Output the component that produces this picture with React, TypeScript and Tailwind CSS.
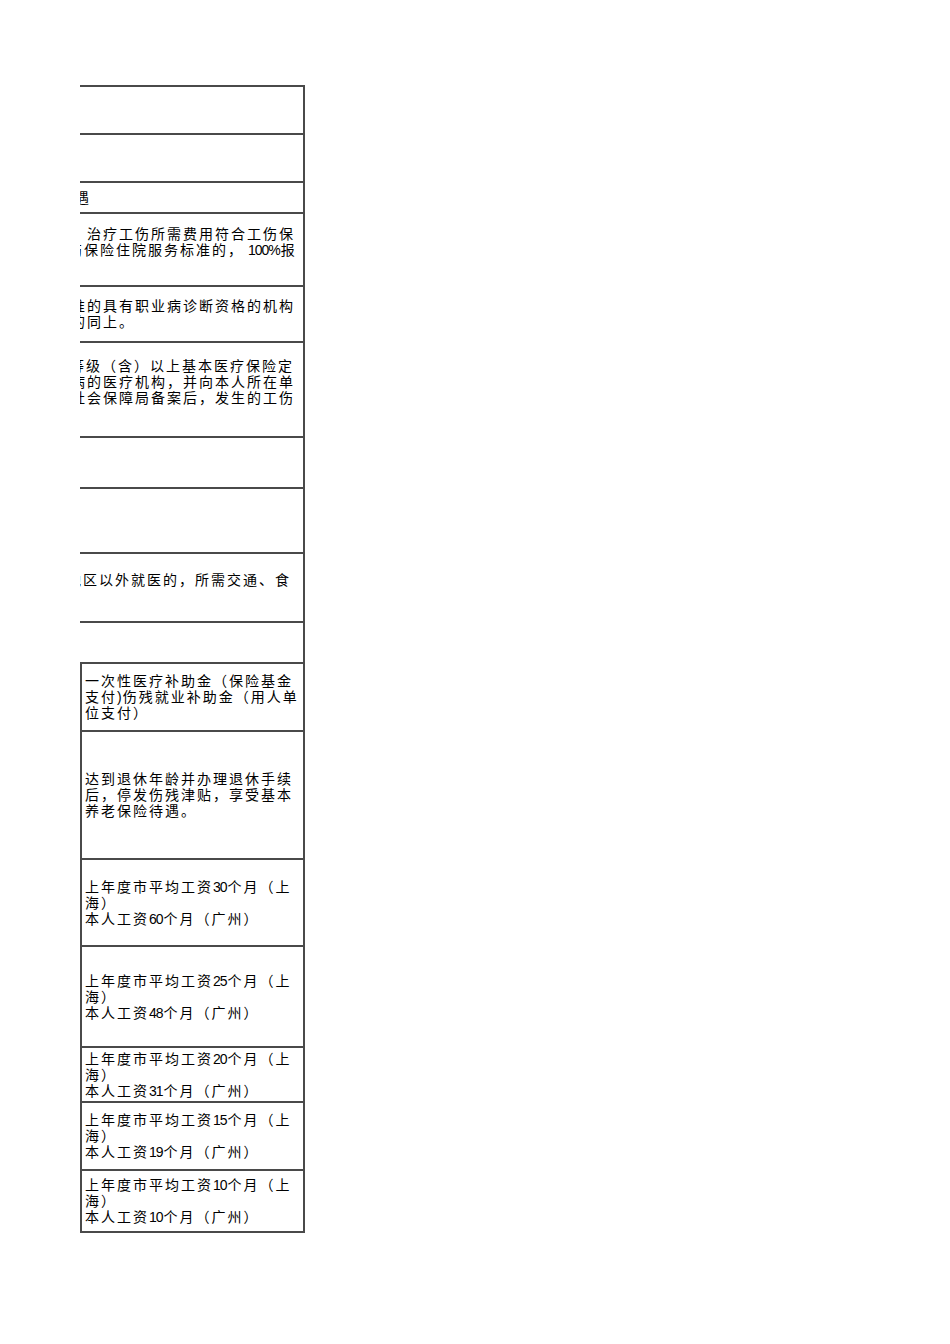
import React from "react";

const font = "font-['Liberation_Sans','Noto_Sans_CJK_SC',sans-serif]";

function D({ children }: { children: React.ReactNode }) {
  return <span className="text-[14px] tracking-[-1px]">{children}</span>;
}

type Line = { ml: string; text: React.ReactNode } | null;

function UpperRow({ h, lines }: { h: string; lines?: Line[] }) {
  return (
    <div className={`${h} border-b-2 border-[#4a4a4a] overflow-hidden flex flex-col justify-center`}>
      {lines &&
        lines.map((l, i) =>
          l ? (
            <div key={i} className={`h-4 leading-4 whitespace-nowrap ${l.ml}`}>
              {l.text}
            </div>
          ) : (
            <div key={i} className="h-4" />
          )
        )}
    </div>
  );
}

function LowerRow({ h, lines }: { h: string; lines: React.ReactNode[] }) {
  return (
    <div className={`${h} border-b-2 border-[#4a4a4a] overflow-hidden flex flex-col justify-center pl-[3px]`}>
      {lines.map((l, i) => (
        <div key={i} className="h-4 leading-4 whitespace-nowrap">
          {l}
        </div>
      ))}
    </div>
  );
}

function Wage({ a, b }: { a: string; b: string }) {
  return [
    <>上年度市平均工资<D>{a}</D><span className="ml-[1px]">个</span>月（上</>,
    <>海）</>,
    <>本人工资<D>{b}</D><span className="ml-[1px]">个</span>月（广州）</>,
  ];
}

export default function App() {
  return (
    <div className={`min-h-[1344px] bg-white text-black ${font} text-[14px] tracking-[2px]`}>
      <div className="pt-[85px] pl-[80px]">
        <div className="w-[225px] border-t-2 border-r-2 border-[#4a4a4a]">
          <UpperRow h="h-[48px]" />
          <UpperRow h="h-[48px]" />
          <UpperRow h="h-[31px]" lines={[{ ml: "ml-[-21px]", text: "待遇" }]} />
          <UpperRow
            h="h-[73px]"
            lines={[
              { ml: "ml-[-9px]", text: "，治疗工伤所需费用符合工伤保" },
              { ml: "ml-[-12px]", text: <>伤保险住院服务标准的，<span className="tracking-[0px]"> </span><D>100%</D><span className="ml-[1px]">报</span></> },
              null,
            ]}
          />
          <UpperRow
            h="h-[56px]"
            lines={[
              { ml: "ml-[-9px]", text: "准的具有职业病诊断资格的机构" },
              { ml: "ml-[-9px]", text: "的同上。" },
            ]}
          />
          <UpperRow
            h="h-[95px]"
            lines={[
              { ml: "ml-[-10px]", text: "等级（含）以上基本医疗保险定" },
              { ml: "ml-[-9px]", text: "病的医疗机构，并向本人所在单" },
              { ml: "ml-[-9px]", text: "社会保障局备案后，发生的工伤" },
              null,
            ]}
          />
          <UpperRow h="h-[51px]" />
          <UpperRow h="h-[65px]" />
          <UpperRow
            h="h-[69px]"
            lines={[{ ml: "ml-[-13px]", text: "地区以外就医的，所需交通、食" }, null]}
          />
          <UpperRow h="h-[41px]" />
          <div className="border-l-2 border-[#4a4a4a]">
            <LowerRow
              h="h-[68px]"
              lines={[
                "一次性医疗补助金（保险基金",
                <>支付<span className="tracking-[1px]">)</span>伤残就业补助金（用人单</>,
                "位支付）",
              ]}
            />
            <LowerRow
              h="h-[128px]"
              lines={[
                "达到退休年龄并办理退休手续",
                "后，停发伤残津贴，享受基本",
                "养老保险待遇。",
              ]}
            />
            <LowerRow h="h-[87px]" lines={Wage({ a: "30", b: "60" })} />
            <LowerRow h="h-[101px]" lines={Wage({ a: "25", b: "48" })} />
            <LowerRow h="h-[55px]" lines={Wage({ a: "20", b: "31" })} />
            <LowerRow h="h-[68px]" lines={Wage({ a: "15", b: "19" })} />
            <LowerRow h="h-[62px]" lines={Wage({ a: "10", b: "10" })} />
          </div>
        </div>
      </div>
    </div>
  );
}
